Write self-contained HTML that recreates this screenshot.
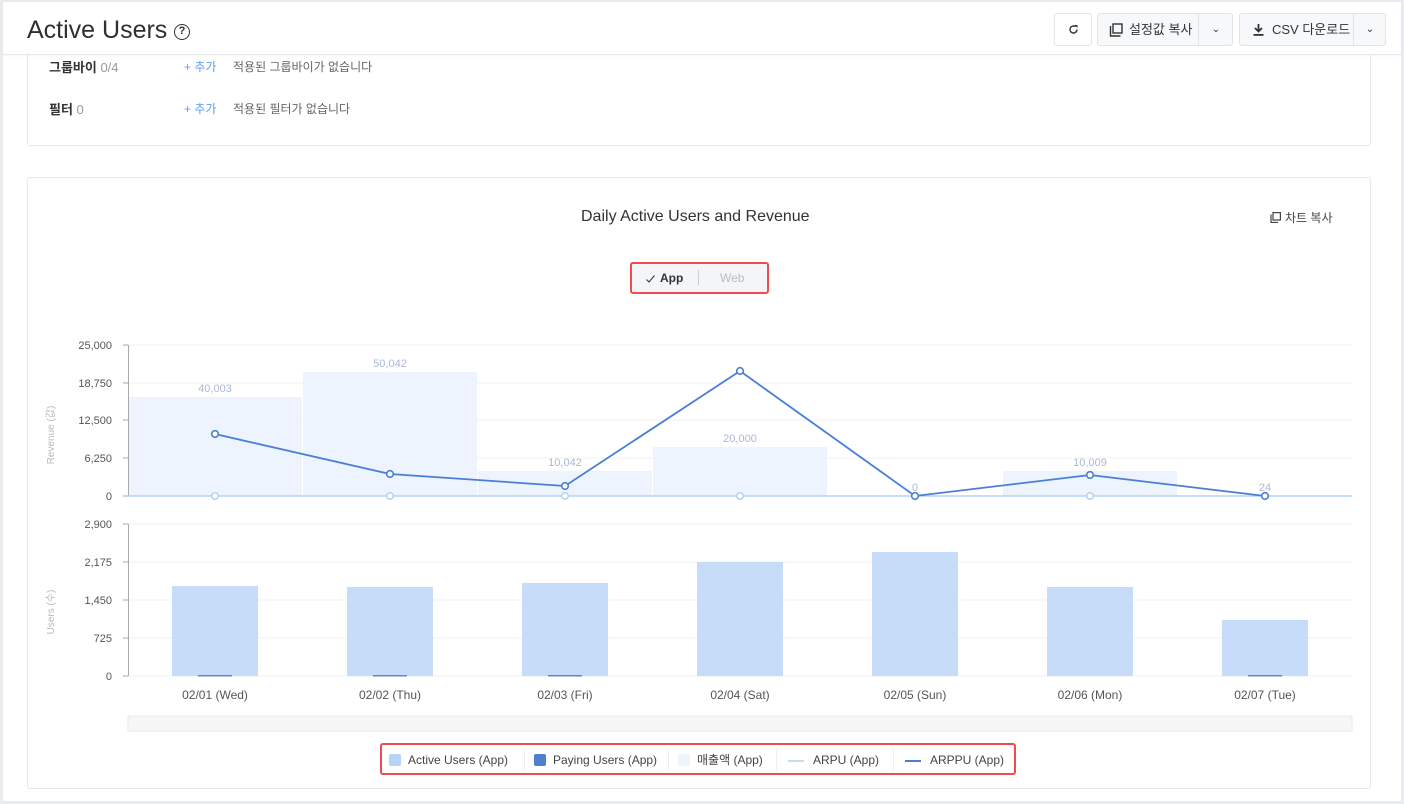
<!DOCTYPE html>
<html><head><meta charset="utf-8"><style>
*{box-sizing:border-box;margin:0;padding:0}
body{width:1404px;height:804px;overflow:hidden;background:#fff;font-family:"Liberation Sans","Noto Sans CJK KR",sans-serif;position:relative;color:#333}
.frame{position:absolute;left:0;top:0;width:1404px;height:804px;border:3px solid #e9ebee;border-top:2px solid #e9ebee}
.header{position:absolute;left:3px;top:2px;width:1398px;height:53px;background:#fff;border-bottom:1px solid #e6e8eb;box-shadow:0 1px 2px rgba(0,0,0,.04);z-index:2}
.title{position:absolute;left:24px;top:14px;font-size:25px;color:#2d3034}
.q{position:absolute;left:171px;top:22px;width:16px;height:16px;border:1.6px solid #333;border-radius:50%;font-size:11px;font-weight:bold;text-align:center;line-height:13px}
.btn{position:absolute;top:11px;height:33px;border:1px solid #e2e4e8;border-radius:3px;background:#f7f8fa;font-size:13px;color:#333;line-height:31px}
.card{position:absolute;left:27px;width:1344px;border:1px solid #e6e8eb;border-radius:3px;background:#fff}
.lbl{position:absolute;font-size:13px;font-weight:bold;color:#333}
.lbl span{font-weight:normal;color:#999}
.add{position:absolute;font-size:12px;color:#5b9ef0}
.none{position:absolute;font-size:12px;color:#666}
.legend{position:absolute;left:380px;top:743px;width:636px;height:32px;border:2.5px solid #f04b50;border-radius:3px;font-size:12px;color:#444}
.li{position:absolute;top:4px;height:22px;line-height:22px;border-right:1px solid #eee}
</style></head><body>
<div class="frame"></div>
<div class="header">
<div class="title">Active Users</div>
<div class="q">?</div>
<div class="btn" style="left:1051px;width:38px;background:#fff"><svg style="position:absolute;left:13px;top:10px" width="11" height="11" viewBox="0 0 11 11"><path d="M9 5.5A3.5 3.5 0 1 1 7.6 2.7" fill="none" stroke="#333" stroke-width="1.4"/><path d="M6.5 1h3v3z" fill="#333"/></svg></div>
<div class="btn" style="left:1094px;width:136px"><svg style="position:absolute;left:11px;top:9px" width="14" height="14" viewBox="0 0 14 14"><path d="M1.5 3v10h10" fill="none" stroke="#333" stroke-width="1.4"/><rect x="4" y="1" width="9" height="9" fill="none" stroke="#333" stroke-width="1.4"/></svg><span style="position:absolute;left:31px">설정값 복사</span><span style="position:absolute;left:100px;top:0;height:31px;border-left:1px solid #e2e4e8;width:35px;text-align:center;font-size:10px">&#x2304;</span></div>
<div class="btn" style="left:1236px;width:147px"><svg style="position:absolute;left:13px;top:10px" width="11" height="12" viewBox="0 0 11 12"><path d="M5.5 0v7M2 4l3.5 3.5L9 4" fill="none" stroke="#333" stroke-width="1.8"/><rect x="0.5" y="10" width="10" height="1.8" fill="#333"/></svg><span style="position:absolute;left:32px">CSV 다운로드</span><span style="position:absolute;left:113px;top:0;height:31px;border-left:1px solid #e2e4e8;width:33px;text-align:center;font-size:10px">&#x2304;</span></div>
</div>
<div class="card" style="top:20px;height:126px">
<div class="lbl" style="left:21px;top:36px">그룹바이 <span>0/4</span></div>
<div class="add" style="left:156px;top:37px">+ 추가</div>
<div class="none" style="left:205px;top:37px">적용된 그룹바이가 없습니다</div>
<div class="lbl" style="left:21px;top:78px">필터 <span>0</span></div>
<div class="add" style="left:156px;top:79px">+ 추가</div>
<div class="none" style="left:205px;top:79px">적용된 필터가 없습니다</div>
</div>
<div class="card" style="top:177px;height:612px"></div>
<div style="position:absolute;left:581px;top:208px;font-size:16px;color:#333">Daily Active Users and Revenue</div>
<div style="position:absolute;left:1270px;top:209px;font-size:12px;color:#444"><svg style="vertical-align:-1px;margin-right:4px" width="11" height="11" viewBox="0 0 11 11"><path d="M1 2.5v8h7" fill="none" stroke="#444" stroke-width="1.2"/><rect x="3" y="0.6" width="7.4" height="7.4" fill="none" stroke="#444" stroke-width="1.2"/></svg>차트 복사</div>
<div style="position:absolute;left:630px;top:262px;width:139px;height:32px;border:2.5px solid #f04b50;border-radius:3px;background:#f4f5f7;font-size:12px">
<svg style="position:absolute;left:14px;top:11px" width="9" height="8" viewBox="0 0 9 8"><path d="M0.5 4.5l2.5 2.5 5.5-6.5" fill="none" stroke="#333" stroke-width="1.1"/></svg>
<span style="position:absolute;left:28px;top:7px;color:#333;font-weight:bold">App</span>
<span style="position:absolute;left:66px;top:6px;height:15px;border-left:1px solid #ccc"></span>
<span style="position:absolute;left:88px;top:7px;color:#bbb">Web</span></div>
<svg style="position:absolute;left:0;top:0" width="1404" height="804" font-family="Liberation Sans,Noto Sans CJK KR,sans-serif">
<g stroke="#f0f1f3" stroke-width="1">
<line x1="128" y1="345" x2="1352" y2="345"/><line x1="128" y1="383" x2="1352" y2="383"/><line x1="128" y1="420" x2="1352" y2="420"/><line x1="128" y1="458" x2="1352" y2="458"/><line x1="128" y1="496" x2="1352" y2="496"/>
<line x1="128" y1="524" x2="1352" y2="524"/><line x1="128" y1="562" x2="1352" y2="562"/><line x1="128" y1="600" x2="1352" y2="600"/><line x1="128" y1="638" x2="1352" y2="638"/><line x1="128" y1="676" x2="1352" y2="676"/>
</g>
<g fill="#edf4fd">
<rect x="128" y="397" width="174" height="99"/><rect x="303" y="372" width="174" height="124"/><rect x="478" y="471" width="174" height="25"/><rect x="653" y="447" width="174" height="49"/><rect x="1003" y="471" width="174" height="25"/>
</g>
<g stroke="#aaa"><line x1="128.5" y1="345" x2="128.5" y2="496"/><line x1="128.5" y1="524" x2="128.5" y2="676"/>
<line x1="123" y1="345" x2="128" y2="345"/><line x1="123" y1="383" x2="128" y2="383"/><line x1="123" y1="420" x2="128" y2="420"/><line x1="123" y1="458" x2="128" y2="458"/><line x1="123" y1="496" x2="128" y2="496"/>
<line x1="123" y1="524" x2="128" y2="524"/><line x1="123" y1="562" x2="128" y2="562"/><line x1="123" y1="600" x2="128" y2="600"/><line x1="123" y1="638" x2="128" y2="638"/><line x1="123" y1="676" x2="128" y2="676"/></g>
<g font-size="11" fill="#555" text-anchor="end">
<text x="112" y="349">25,000</text><text x="112" y="387">18,750</text><text x="112" y="424">12,500</text><text x="112" y="462">6,250</text><text x="112" y="500">0</text>
<text x="112" y="528">2,900</text><text x="112" y="566">2,175</text><text x="112" y="604">1,450</text><text x="112" y="642">725</text><text x="112" y="680">0</text></g>
<text transform="translate(54,435) rotate(-90)" font-size="10" fill="#bbb" text-anchor="middle">Revenue (값)</text>
<text transform="translate(54,612) rotate(-90)" font-size="10" fill="#bbb" text-anchor="middle">Users (수)</text>
<g font-size="11" fill="#a9b8d8" text-anchor="middle">
<text x="215" y="392">40,003</text><text x="390" y="367">50,042</text><text x="565" y="466">10,042</text><text x="740" y="442">20,000</text><text x="915" y="491">0</text><text x="1090" y="466">10,009</text><text x="1265" y="491">24</text></g>
<line x1="128" y1="496" x2="1352" y2="496" stroke="#b3d2fa" stroke-width="1.5"/>
<g fill="#fff" stroke="#b3d2fa" stroke-width="1.5"><circle cx="215" cy="496" r="3.3"/><circle cx="390" cy="496" r="3.3"/><circle cx="565" cy="496" r="3.3"/><circle cx="740" cy="496" r="3.3"/><circle cx="1090" cy="496" r="3.3"/></g>
<polyline points="215,434 390,474 565,486 740,371 915,496 1090,475 1265,496" fill="none" stroke="#4a7fd4" stroke-width="1.8"/>
<g fill="#fff" stroke="#4a7fd4" stroke-width="1.6"><circle cx="215" cy="434" r="3.3"/><circle cx="390" cy="474" r="3.3"/><circle cx="565" cy="486" r="3.3"/><circle cx="740" cy="371" r="3.3"/><circle cx="915" cy="496" r="3.3"/><circle cx="1090" cy="475" r="3.3"/><circle cx="1265" cy="496" r="3.3"/></g>
<g fill="#c6dcf9">
<rect x="172" y="586" width="86" height="90"/><rect x="347" y="587" width="86" height="89"/><rect x="522" y="583" width="86" height="93"/><rect x="697" y="562" width="86" height="114"/><rect x="872" y="552" width="86" height="124"/><rect x="1047" y="587" width="86" height="89"/><rect x="1222" y="620" width="86" height="56"/></g>
<g fill="#5b87d0"><rect x="198" y="675" width="34" height="1.5"/><rect x="373" y="675" width="34" height="1.5"/><rect x="548" y="675" width="34" height="1.5"/><rect x="1248" y="675" width="34" height="1.5"/></g>
<g font-size="12" fill="#555" text-anchor="middle">
<text x="215" y="699">02/01 (Wed)</text><text x="390" y="699">02/02 (Thu)</text><text x="565" y="699">02/03 (Fri)</text><text x="740" y="699">02/04 (Sat)</text><text x="915" y="699">02/05 (Sun)</text><text x="1090" y="699">02/06 (Mon)</text><text x="1265" y="699">02/07 (Tue)</text></g>
<rect x="128" y="716" width="1224" height="15" fill="#f7f7f8" stroke="#e8e9eb" stroke-width="1"/>
</svg>
<div class="legend">
<div class="li" style="left:3px;width:140px"><span style="position:absolute;left:4px;top:5px;width:12px;height:12px;background:#b6d3fa;border-radius:2px"></span><span style="position:absolute;left:23px">Active Users (App)</span></div>
<div class="li" style="left:147px;width:140px"><span style="position:absolute;left:5px;top:5px;width:12px;height:12px;background:#4f80cc;border-radius:2px"></span><span style="position:absolute;left:24px">Paying Users (App)</span></div>
<div class="li" style="left:291px;width:104px"><span style="position:absolute;left:5px;top:5px;width:12px;height:12px;background:#eef5fd;border-radius:2px"></span><span style="position:absolute;left:24px">매출액 (App)</span></div>
<div class="li" style="left:399px;width:113px"><span style="position:absolute;left:7px;top:11px;width:16px;height:2px;background:#c3dcfb"></span><span style="position:absolute;left:32px">ARPU (App)</span></div>
<div class="li" style="left:516px;width:115px;border:none"><span style="position:absolute;left:7px;top:11px;width:16px;height:2px;background:#4a7fd4"></span><span style="position:absolute;left:32px">ARPPU (App)</span></div>
</div>
</body></html>
